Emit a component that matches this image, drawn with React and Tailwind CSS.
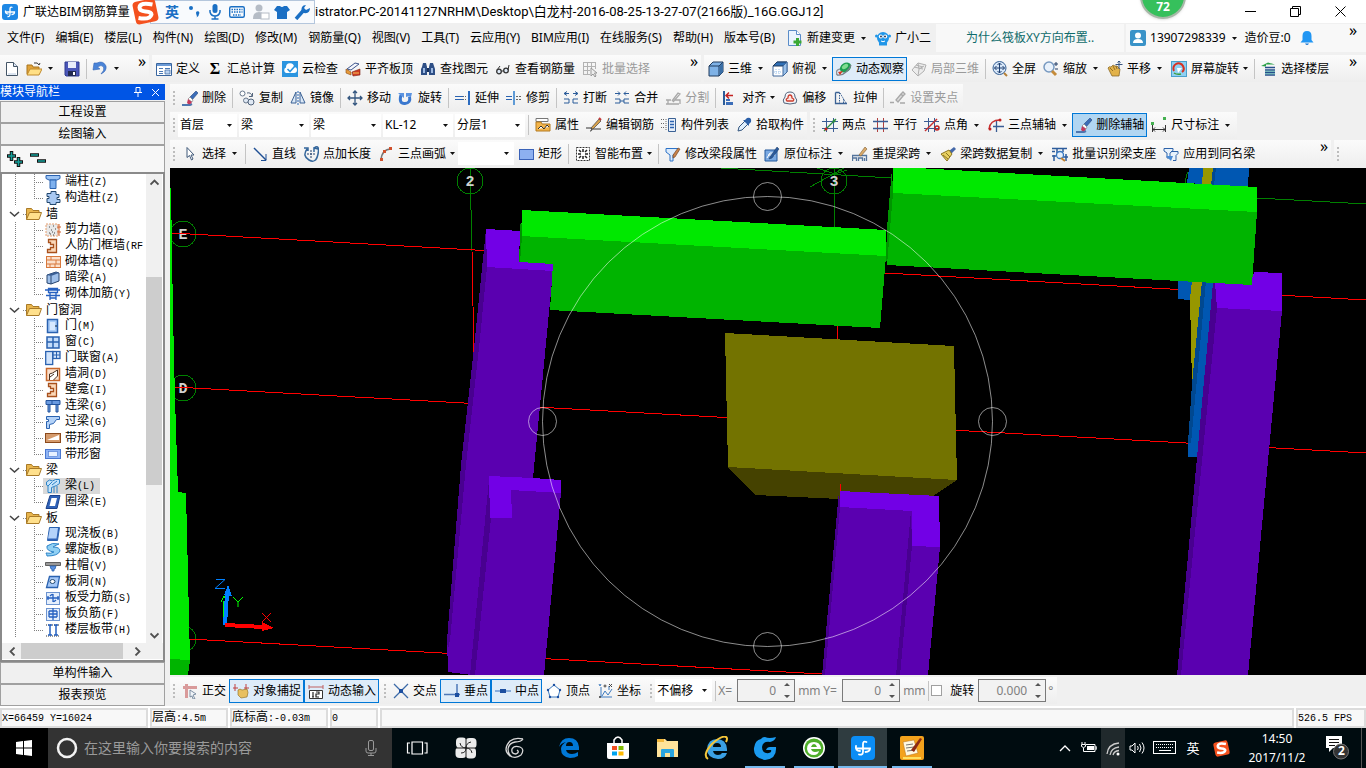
import React from "react";

const blue = "#2a62b0";
const navy = "#24496f";
const gray = "#a8a8a8";

const glyphs = {
  app: <><rect width="16" height="16" rx="3" fill="#1e88e5" /><path d="M10.500 3.500q-2.500-1-2.500 1.500v5q0 3-2.500 2.500M3.500 6.500q-.5 3.500 3 3.500M3.500 8h9q0 2.500-3 2.500" fill="none" stroke="#fff" strokeWidth="1.300" /></>,
  newfile: <><path d="M2.500 1.500h7l4 4v9h-11z" fill="#fff" stroke="#456" /><path d="M9.500 1.500v4h4" fill="#dbe6f5" stroke="#456" /><path d="M4 13h8" stroke="#b9cbe2" /></>,
  open: <><path d="M1 4h5l1 2h6v7H1z" fill="#e0a33a" stroke="#a8741c" /><path d="M1 14l3-6h12l-3 6z" fill="#ffdf85" stroke="#c08a2c" /><path d="M8 2q4-1 5 2M13 4l1-2" stroke="#333" fill="none" /></>,
  save: <><path d="M1 1h14v14H2l-1-1z" fill="#4a56b8" stroke="#2f3a90" /><path d="M4 1h8v6H4z" fill="#e8ecfa" /><path d="M4 10h8v5H4z" fill="#222a50" /><path d="M9 11h2v3H9z" fill="#fff" /></>,
  undo: <><path d="M2 2l-1 7 7-1-2.500-2q4-3 6 0 1.500 3-2.500 7 6-3 5-8-3-6-9-3z" fill="#4a84d8" stroke="#3567b5" strokeWidth=".6" /></>,
  define: <><path d="M.5 2.500h15v12H.5z" fill="#fff" stroke="#39659e" /><path d="M1 3h14v2H1z" fill="#6b9ad6" /><path d="M3 7.500h4M3 10.500h4M3 12.500h4M9 7.500h5M9 10.500h5" stroke="#4a78b4" /><path d="M9 9h5v4H9z" fill="#b9d2f0" stroke="#39659e" strokeWidth=".7" /></>,
  cloudcheck: <><rect width="16" height="16" fill="#2b95e0" /><path d="M4 12a3 3 0 010-5.500 4 4 0 018-.5 3 3 0 010 6z" fill="#fff" /><path d="M5.500 8l2.500 2.500L13 5" stroke="#2b95e0" fill="none" strokeWidth="1.600" /></>,
  level: <><path d="M2 8l8-6 4 1-8 6z" fill="#f4f6fc" stroke="#3f568c" /><path d="M1 8l5 3v3l-5-2z" fill="#e69a3a" stroke="#8c4a10" strokeWidth=".6" /><path d="M7 11l8-3v6l-7 1z" fill="#cf3c22" stroke="#7c2414" strokeWidth=".6" /><path d="M8 12h6" stroke="#f7c55a" /></>,
  binoc: <><path d="M2 6l1-4h3l1 4v8H1V8zM9 6l1-4h3l2 6v6H9z" fill="#2e4f86" /><path d="M7 7h2v4H7z" fill="#18315c" /><path d="M3 7h2v5H3zM11 7h2v5h-2z" fill="#9db9e2" /></>,
  glasses: <><circle cx="4" cy="10.500" r="2.300" fill="#dfeaf7" stroke="#333" strokeWidth="1.300" /><circle cx="11" cy="9.500" r="2.300" fill="#dfeaf7" stroke="#333" strokeWidth="1.300" /><path d="M6.500 10h2M2 9l3-4M13 9l1-5" stroke="#333" fill="none" /></>,
  batch: <><path d="M1 1.500h13M1 5.500h13M1 9.500h7M1 13.500h7M1.500 1v13M5.500 1v13M9.500 1v7M13.500 1v7" stroke="#b3b3b3" /><path d="M9 7v8l2-2 2 3 1-1-1.500-3H15z" fill="#eee" stroke="#999" /></>,
  cube: <><path d="M1 5l4-4h10v10l-4 4H1z" fill="#7fb2e6" stroke="#203a5c" /><path d="M1 5h10v10M11 5l4-4" fill="none" stroke="#203a5c" /><path d="M11.500 5L15 1.500V11l-3.500 3.500z" fill="#3a6ea5" /></>,
  cubetop: <><path d="M1 5l4-4h10v10l-4 4H1z" fill="#fff" stroke="#41699c" /><path d="M1 5l4-4h10l-4 4z" fill="#2f6fb5" stroke="#203a5c" /><path d="M11 5v10l4-4V1z" fill="#9cc2ea" stroke="#41699c" /><path d="M4 8v6M7 8v6M2 11h8" stroke="#9cc2ea" strokeDasharray="1 1" /></>,
  orbit: <><path d="M1 14Q-1 9 4 8" stroke="#8d9298" strokeWidth="1.500" fill="none" /><ellipse cx="9.500" cy="6.500" rx="6" ry="4.500" transform="rotate(-35 9.500 6.500)" fill="#1e9e52" /><ellipse cx="9" cy="5.500" rx="3.500" ry="2" transform="rotate(-35 9 5.500)" fill="#7fdc92" /><path d="M1 14q5 1 9-3 4-3 5-7" stroke="#777f88" strokeWidth="1.300" fill="none" /><path d="M2 11l5-1-3 4z" fill="#d43a20" /></>,
  local3d: <path d="M1 9l6-7 8 2-2 6-6 5zM7 2l1 6-1 7M3 6l9 2M8 8l5-3M5 4l7 2" fill="#ececec" stroke="#b0b0b0" />,
  full: <><circle cx="7.500" cy="7" r="6.500" fill="#d7e6f7" stroke="#345f94" /><path d="M7.500 2v10M2.500 7h10M5.500 4l2-2 2 2M5.500 10l2 2 2-2M4.500 5l-2 2 2 2M10.500 5l2 2-2 2" stroke="#1e3f70" fill="none" /><path d="M12 12l3 3" stroke="#b58038" strokeWidth="2" /></>,
  zoomi: <><circle cx="6" cy="6" r="5" fill="#e8f1fb" stroke="#7799c0" strokeWidth="1.500" /><path d="M9 10l4 4" stroke="#c58b3a" strokeWidth="3" /><path d="M11 3h4M13 1v4M12 8h3" stroke="#223c66" /></>,
  pan: <><path d="M1 7q1-2 3-1l2-2 2 1 2 0 3 3-1 7H5z" fill="#e2b24a" stroke="#7e5d1c" strokeWidth=".7" /><path d="M3 7l3 3M6 5l2 4M9 5l1 3" stroke="#7e5d1c" strokeWidth=".8" /><path d="M12 0v8M8.500 3.500h7M10.500 1.500l1.500-1.500 1.500 1.500" stroke="#36537e" fill="none" /></>,
  screenrot: <><rect x=".5" y=".5" width="15" height="15" fill="#8fd0f2" stroke="#4aa0cc" /><path d="M3 10a5 5 0 019-5q2 4-1 6" stroke="#d83020" fill="none" strokeWidth="2" /><path d="M6 7h5l-4 5z" fill="#fff" /><path d="M3 12q3 2 7 1" stroke="#3f9c38" fill="none" strokeWidth="1.500" /></>,
  floors: <><path d="M0 5l7-3.500 7 2H5v2z" fill="#2aa048" /><path d="M4 6.500h10M4 9h10M4 11.500h10M4 14h10" stroke="#274e8c" strokeWidth="1.500" /><path d="M4 10.200h10M4 12.800h10" stroke="#39a6a0" strokeWidth=".8" /></>,
  brush: <><path d="M0 15h8l2-1" stroke="#4d77b0" strokeWidth="2" /><path d="M8 7l6-6 2 2-6 7z" fill="#3b6db8" stroke="#25477c" strokeWidth=".6" /><path d="M8 7l3 3-1 2-4-3z" fill="#fff" stroke="#777" strokeWidth=".6" /><path d="M6 9l4 3q-2 4-5 1z" fill="#c33a5c" /></>,
  copy: <><circle cx="3.500" cy="3.500" r="2.500" fill="#fff" stroke="#68788c" /><circle cx="7" cy="10.500" r="2.500" fill="#dfe8f3" stroke="#68788c" /><circle cx="12" cy="12" r="3" fill="#dfe8f3" stroke="#52647c" /><path d="M8 3q4-1 5 3M13.500 3v3.500H10" stroke="#52647c" fill="none" /></>,
  mirror: <><path d="M6 2v11H1zM10 2v11h5z" fill="#dce9f7" stroke="#3a6194" /><path d="M8 1v14" stroke="#2464b4" strokeDasharray="2 1" /></>,
  move: <path d="M8 1v14M1 8h14M6 3l2-2 2 2M6 13l2 2 2-2M3 6L1 8l2 2M13 6l2 2-2 2" stroke="#34567f" fill="none" strokeWidth="1.300" />,
  rotate: <><path d="M3 5Q.5 14 7 13.500 13 13 11.500 6.500" stroke="#3a78cf" fill="none" strokeWidth="3" /><path d="M0 3h6v5zM8 3h6l-1 4-2-1-3 1z" fill="#5b93e0" /></>,
  extend: <><path d="M0 6.500h8M0 9.500h8" stroke={blue} /><path d="M8 6.500h4M8 9.500h4" stroke="#666" strokeDasharray="1 1" /><path d="M14 1v14" stroke="#2c6cc0" strokeWidth="2" /></>,
  trim: <><path d="M0 6.500h6M0 9.500h6" stroke={blue} /><path d="M10 6.500h5M10 9.500h5" stroke="#666" strokeDasharray="2 1" /><path d="M8 1v14" stroke="#5f9bd6" strokeWidth="2" /></>,
  breaki: <path d="M1 3.500h5M4 1.500l-3 2 3 2M15 3.500h-5M12 1.500l3 2-3 2M1 9h5M1 13h5M10 9h5M10 13h5M6 9v4M10 9v4" stroke="#2b5c9a" fill="none" />,
  merge: <path d="M1 3.500h5M4 1.500l2 2-2 2M15 3.500h-5M12 1.500l-2 2 2 2M1 9h5v4H1M15 9h-5v4h5M6 11h4" stroke="#2b5c9a" fill="none" />,
  split: <path d="M1 10h5M1 14h13M3 10v4M7 11l6-8 2 1-7 8M10 10h5v4" stroke={gray} fill="none" strokeWidth="1.300" />,
  align: <><path d="M2 1v14" stroke="#2b5c9a" strokeWidth="2" /><path d="M4 5.500h7M7 2.500l-3 3 3 3" stroke="#c32222" fill="none" strokeWidth="1.500" /><path d="M4 9h4v2H4zM4 12h7v3H4z" fill="#3b6db8" /></>,
  offset: <><path d="M2 13q-2-3 1-6 0-5 5-5t5 5q3 3 1 6-6 2-12 0z" fill="#f4f4f8" stroke="#52647c" /><path d="M5 11q-2-2 1-3 0-3 2-3t2 3q3 1 1 3z" fill="#fce3df" stroke="#cb3c2c" strokeWidth="1.300" /></>,
  stretch: <><path d="M2.500 2.500h4M2.500 2.500v11h4M6 13.500h8" stroke="#3a6194" fill="none" strokeWidth="1.300" /><path d="M6.500 2.500v11M7 3l6 10M10.500 9v4" stroke="#3a6194" strokeDasharray="1.500 1" fill="none" /></>,
  grippt: <path d="M0 12.500h4M6 10l5-6 2 2-5 6zM11 4l2-2 2 2-2 2M10 13h5" stroke={gray} fill="#ddd" strokeWidth="1.300" />,
  prop: <><path d="M1 1.500h12v3H1z" fill="#fff" stroke="#777" /><path d="M1 5h5l1 2h8v7H1z" fill="#f3b44a" stroke="#b37a20" /><path d="M3 12l3-3 3 3 3-4 2 2" stroke="#333" fill="#fff" /></>,
  editbar: <><path d="M0 11h5q2 3-1 3M5 12h10" stroke="#333" fill="none" /><path d="M5 11l8-9 2 2-8 8z" fill="#d8a24c" stroke="#444" strokeWidth=".7" /><path d="M13 1l2 2" stroke="#c43a3a" strokeWidth="2" /></>,
  list: <><path d="M0 2.500h3M0 6.500h3M0 10.500h3M5 2v12" stroke="#666" strokeDasharray="1 1" /><path d="M7.500 1.500h7v13h-7z" fill="#e7effa" stroke="#3a6194" /><path d="M9 4.500h4M9 7.500h4M9 10.500h4" stroke={blue} strokeWidth="1.500" /></>,
  picker: <><path d="M2 14l1-4 6-6 3 3-6 6z" fill="#dfeefc" stroke="#34567f" /><path d="M7 3l2 0 2-2q5-1 4 4l-2 2v2z" fill="#2a5fa8" /></>,
  twopt: <><path d="M4.500 1v14M11.500 1v14M0 4.500h16M0 11.500h16" stroke="#3a5c94" /><path d="M2 14L14 2" stroke="#2c8c40" strokeWidth="1.300" /><circle cx="4" cy="12" r="1.500" fill="#c02020" /><circle cx="12" cy="4" r="1.500" fill="#2c8c40" /></>,
  parallel: <><path d="M4.500 1v14M10.500 1v14" stroke="#b04040" /><path d="M0 4.500h15M0 11.500h15" stroke="#3a5c94" strokeWidth="1.500" /></>,
  ptangle: <><path d="M4.500 1v14M10.500 1v14M0 4.500h15M0 11.500h15" stroke="#3a5c94" /><path d="M1 14L13 2" stroke="#c83030" strokeWidth="1.500" /><circle cx="13" cy="11" r="2" fill="none" stroke="#c02020" strokeWidth="1.500" /></>,
  threept: <><path d="M8.500 4v11M5 9.500h11" stroke="#3a5c94" strokeWidth="1.300" /><path d="M1 12Q2 3 12 3" stroke="#c83030" fill="none" strokeWidth="1.300" /><circle cx="2" cy="12" r="1.500" fill="#c02020" /><circle cx="12" cy="3" r="1.500" fill="#c02020" /></>,
  dim: <><path d="M1.500 8v7M14.500 8v7M2 12.500h12M4 10.500l-2 2 2 2M12 10.500l2 2-2 2" stroke="#333" fill="none" /><path d="M0 5h3v3H0zM12 0h3v3h-3z" fill="#44b050" /></>,
  arrow: <path d="M5 1.500v10l2.500-2 2 4.500 1.500-1-2-4h3z" fill="#fff" stroke="#3f5878" />,
  line: <><path d="M2 2l12 12" stroke="#1e4f94" strokeWidth="1.500" /><path d="M14 8v6.500H9" stroke="#1e4f94" fill="none" /></>,
  ptlen: <><path d="M4 3Q-1 10 6 14t9-6-4-6M1 2h4v3M15 3l-4-1 0 4" stroke="#35679c" fill="none" strokeWidth="1.500" /><path d="M8 4v8M4 8h8" stroke="#23406c" strokeDasharray="2 1" /></>,
  arc: <><path d="M3 14Q4 3 13 3" stroke="#777" fill="none" strokeWidth="1.500" /><path d="M2 12h3v3H2zM5 4h3v3H5zM11 1h3v3h-3z" fill="#d0502c" /></>,
  rect: <rect x="1.500" y="3.500" width="14" height="10" fill="#8db0f0" stroke="#3a62b8" />,
  smart: <><path d="M1.500 1.500h13v13h-13z" fill="#fff" stroke="#333" strokeDasharray="2 1" /><path d="M4 4l2 2M12 4l-2 2M4 12l2-2M12 12l-2-2M8 3v3M8 10v3M3 8h3M10 8h3" stroke="#222" strokeWidth="1.500" /></>,
  modseg: <><path d="M1 2.500h12v3L8 9v6H5V9L1 6z" fill="#dcebfb" stroke="#2d73c8" /><path d="M8 9l5-7 2 1-5 8-2 1z" fill="#c8824a" stroke="#6a3e1c" strokeWidth=".6" /></>,
  mark: <><path d="M1 4h12v11H1z" fill="#7aa9e2" stroke="#22599c" /><path d="M3 12l3-5h5M4 9h7" stroke="#fff" fill="none" /><path d="M6 11l7-10 2 2-7 9-3 1z" fill="#2a5a9c" stroke="#17375f" strokeWidth=".5" /></>,
  respan: <><path d="M.5 15v-3h4v3M6.500 15v-3h4v3M.5 12V9.500h14V15M12.500 15v-3" stroke="#54749c" fill="none" strokeWidth="1.300" /><path d="M7 9l6-8 2 2-6 7z" fill="#dcac6c" stroke="#7a5a30" strokeWidth=".6" /></>,
  spancopy: <><path d="M9 5l5-4 2 2-5 5z" fill="#4468a8" /><path d="M1 8l8-4 3 4-5 7z" fill="#e8d060" stroke="#8c7420" /><path d="M3 9l5 4M6 7l4 4" stroke="#8c7420" /></>,
  recog: <><path d="M0 2.500h15M0 5.500h3M2 9v6M5 3v4M11 3v3M14 8v7M0 10h4M11 11h5" stroke="#2d5c9c" strokeWidth="1.500" /><circle cx="8" cy="9" r="3.500" fill="#e5f0fb" stroke="#3577c0" strokeWidth="1.300" /><path d="M9 12l4 3" stroke="#c08030" strokeWidth="2" /></>,
  apply: <><path d="M1 2.500h9v2L7 7v5H4V7L1 5zM8 5.500h7v2l-2 2v5h-3" fill="#e8f2fc" stroke="#2d62a8" /><path d="M3 10l5 5 2-5" fill="#4b8cd6" /></>,
  ortho: <><path d="M1 3h14v3H1zM3 1h3v14H3z" fill="#d99a9a" /><path d="M8 7l6 4-3 1 2 4-2 0-1-3-2 1z" fill="#f0f4f8" stroke="#657890" strokeWidth=".8" /></>,
  snap: <><path d="M2 1v7M13 1v7M0 5h5M11 5h5" stroke="#c04040" /><path d="M5 7q2-2 4 0l5-1q2 3 0 8l-6 1-3-3z" fill="#e8c060" stroke="#8a6820" strokeWidth=".6" /></>,
  dyn: <><path d="M1 2v4M15 2v4M1 4h14" stroke="#c06060" /><path d="M1.500 7.500h13v8h-13z" fill="#fff" stroke="#333" /><path d="M5 9v5M4 14h2M8 9h3v2H8v3h3" stroke="#222" fill="none" strokeWidth="1.200" /></>,
  cross: <><path d="M1 1l14 14M15 1L1 15" stroke="#3d6ba8" strokeWidth="1.300" /><rect x="6" y="6" width="4" height="4" fill="#1c4fa0" /></>,
  perp: <><path d="M0 11.500h16M13 1v11" stroke="#4d78b8" strokeWidth="1.500" /><rect x="11" y="10" width="4" height="4" fill="#1c4fa0" /></>,
  mid: <><path d="M0 8h16" stroke="#6d98d0" strokeWidth="1.500" /><rect x="5" y="6" width="6" height="4" fill="#1c4fa0" /></>,
  vertex: <><path d="M8 2l6 5-2 7H4L2 7z" fill="#fff" stroke="#3d7bc0" /><circle cx="8" cy="2" r="1.200" fill="#1c4fa0" /><circle cx="14" cy="7" r="1.200" fill="#1c4fa0" /><circle cx="2" cy="7" r="1.200" fill="#1c4fa0" /><circle cx="4" cy="14" r="1.200" fill="#1c4fa0" /><circle cx="12" cy="14" r="1.200" fill="#1c4fa0" /></>,
  coord: <><path d="M4 4v10h11M5 13l3-5 3 4 4-6M12 3v4M2 1l1 2 1-2" stroke="#3d7bc0" fill="none" /><circle cx="3" cy="14" r="1" fill="#333" /><circle cx="8" cy="3" r="1" fill="none" stroke="#444" /><path d="M12 1l3 3M15 1l-3 3" stroke="#444" /></>,
  doc: <><path d="M1.500.5h8l4 4v11h-12z" fill="#eaf4ff" stroke="#5a8cc8" /><path d="M9.500.5v4h4" fill="#fff" stroke="#5a8cc8" /><path d="M10.500 8v8M6.500 12h8" stroke="#3aa935" strokeWidth="3" /></>,
  robot: <><circle cx="8" cy="8" r="6" fill="#2196e8" /><circle cx="1.500" cy="6" r="1.500" fill="#2196e8" /><circle cx="14.500" cy="6" r="1.500" fill="#2196e8" /><path d="M4 13h8v2.500H4z" fill="#2196e8" /><circle cx="5.800" cy="6.500" r="2" fill="#fff" /><circle cx="10.200" cy="6.500" r="2" fill="#fff" /><circle cx="6" cy="6.500" r=".9" fill="#124" /><circle cx="10" cy="6.500" r=".9" fill="#124" /><path d="M6 11q2 1.500 4 0" stroke="#fff" fill="none" /></>,
  user: <><rect width="16" height="16" rx="2" fill="#3a93c8" /><circle cx="8" cy="5.500" r="3" fill="#fff" /><path d="M3 13q0-4 5-4t5 4z" fill="#fff" /></>,
  bell: <><path d="M8 1q4.500 0 4.500 5v4l2 2.500h-13l2-2.500V6Q3.500 1 8 1z" fill="#2196f3" /><path d="M6 13.500h4q-2 3-4 0z" fill="#1976d2" /></>,
  folder: <><path d="M.5 13.500v-11h5l1.500 2h6v3" fill="#e9b64e" stroke="#a87a28" /><path d="M.5 13.500l3-7h12l-2.500 7z" fill="#ffe08c" stroke="#a87a28" /></>,
  column: <><path d="M1 1.500h14v3l-3 1.500H4L1 4.500z" fill="#9cc4f4" stroke={blue} /><path d="M5 6h6v8.500H5z" fill="#7db0ee" stroke={blue} /></>,
  column2: <path d="M6 1.500h5v3h3v3h-2v2h3v3h-4v2H5v-2H2v-4h2v-2H2v-3h4z" fill="#a9c9f2" stroke={navy} />,
  wallshear: <><rect x="1" y="2" width="12" height="12" fill="#e8e8e8" stroke="#e8a070" strokeDasharray="2 1" /><path d="M4 5h1M8 4h1M6 8h1M10 7h1M4 11h1M9 11h1M7 10h1M8 13h1M5 12h1" stroke="#444" /><path d="M14 2v12M12 5h4M12 10h4" stroke="#d0602c" /></>,
  ibeam: <path d="M3.500 1.500h8v13h-9v-3h3v-2h3v-3h-3v-2h-2z" fill="#fbd8b8" stroke="#a8501c" strokeWidth="1.300" />,
  brick: <><rect x="1.500" y="2.500" width="14" height="11" fill="#fbe0cc" stroke="#d8783c" /><path d="M1 6h14M1 10h14M6 2v4M11 6v4M5 10v4M10 10v4" stroke="#d8783c" /></>,
  beamdark: <><path d="M2 5l9-3 3 1v8l-8 3-4-1z" fill="#9fc0ea" stroke="#26446e" /><path d="M2 5l4 1 8-3-3-1z" fill="#3a5f94" /><path d="M6 6v8" stroke="#26446e" /></>,
  wallrebar: <path d="M3.500 2.500h9v4h-9zM1 9.500h14M5 6v8M11 6v8M0 4h15M5 12h6" fill="none" stroke="#2660c0" strokeWidth="1.300" />,
  door: <><rect x="2.500" y="1.500" width="10" height="13" fill="#a9ccf8" stroke={blue} strokeWidth="1.500" /><rect x="5" y="4" width="5" height="8" fill="#d8e9ff" /><path d="M10 8h2" stroke="#123" /></>,
  window: <><rect x="2" y="3" width="12" height="11" fill="#c3dcfb" stroke={blue} strokeWidth="1.500" /><path d="M8 3v11M2 8h12" stroke={blue} strokeWidth="1.500" /></>,
  doorwin: <><rect x=".7" y="1.500" width="7" height="13" fill="#d2e4fb" stroke={blue} strokeWidth="1.300" /><rect x="8" y="1.500" width="7" height="7" fill="#d2e4fb" stroke={blue} strokeWidth="1.300" /><path d="M11.500 1v8M8 5h7" stroke={blue} /></>,
  hole: <><rect x="1.500" y="2.500" width="13" height="12" fill="#fbe0cc" stroke="#c8682c" strokeWidth="1.500" /><path d="M4.500 14V8l3-1 5-3v6l-4 4M5 11l4-3" stroke="#4a3020" fill="#fff" /></>,
  linkbeam: <path d="M1 2.500h14v4H1zM3 6v8h2V6M11 6v8h2V6M7 3v3" fill="#6a9ae0" stroke="#24549c" />,
  lintel: <path d="M1.500 2.500h13v3h-3l-3 4-4 1v4h-3v-7h2v-2h-2z" fill="#b3d2f8" stroke={blue} />,
  striphole: <><rect x=".5" y="3.500" width="15" height="9" fill="#d49a6c" stroke="#8c4a1c" /><path d="M2 10l12-5v5z" fill="#fff" /></>,
  stripwin: <><rect x=".5" y="3.500" width="15" height="9" fill="#8fb4f4" stroke="#4a78d0" /><rect x="3.500" y="5.500" width="9" height="5" fill="#e8f1ff" stroke="#4a78d0" strokeWidth=".6" /></>,
  beam: <><path d="M1.500 4l3-2 3 1 3-1.500h4v4l-3 2-5 2v5H3V8L1.500 7z" fill="#c4e2fa" stroke="#2d84c8" /><path d="M9 9v6M12 8v7M3 8l4-4M7 7l5-4" stroke="#2d84c8" /></>,
  ringbeam: <><path d="M5 1.500h10l-3 13H1z" fill="#2f62b8" stroke="#1c428c" /><path d="M6.500 4h5.500l-2 8H4.500z" fill="#fff" /></>,
  slab: <><path d="M4.500 1.500h10l-2 13h-10z" fill="#2f62b8" stroke={blue} /><path d="M5 2h8l-1.500 10.500H3z" fill="#b4d2fa" /></>,
  spiral: <path d="M2 4q5-4 12-2-3 1-6 3 7 0 7 4-2 5-13 5 0-1-1-3 5 1 8-1-8-1-7-6z" fill="#8fd0f4" stroke="#2d84c8" />,
  cap: <><path d="M.5 4.500h15v3H.5z" fill="#999" stroke="#444" strokeWidth=".8" /><path d="M5 8h6l-1 3H9v2H7v-2H6z" fill="#5d92e0" stroke={blue} strokeWidth=".8" /></>,
  slabhole: <><path d="M4.500 2.500h10l-2 11h-11z" fill="#a4c8f8" stroke={blue} strokeWidth="1.300" /><ellipse cx="7.500" cy="7.500" rx="2.500" ry="2" fill="#fff" stroke={navy} /></>,
  slabbar: <><rect x="1.500" y="2.500" width="13" height="12" fill="#e5effc" stroke="#6d94d0" /><path d="M2 8h12M8 4v8M5 6q3-3 3 0M11 10q-3 3-3 0M3 6v4M13 6v4" stroke="#2560c0" fill="none" strokeWidth="1.300" /></>,
  slabneg: <><rect x="1.500" y="2.500" width="13" height="12" fill="#e5effc" stroke="#6d94d0" /><path d="M4 5h8M4 8h8M4 11h8M8 2v12M4 5v6M12 5v6" stroke="#2560c0" fill="none" strokeWidth="1.300" /></>,
  strip: <><path d="M1 3h14M1 14h14" stroke="#333" strokeDasharray="1 1" /><path d="M5 3v10M11 3v10M3 3h4M9 3h4M3 13h4M9 13h4" stroke="#2560c0" strokeWidth="1.500" /></>,
};

const Icon = ({ name }) => (
  <svg className="h-4 w-4 shrink-0" viewBox="0 0 16 16" aria-hidden="true">{glyphs[name]}</svg>
);

const Caret = ({ className }) => (
  <span className={`flex shrink-0 justify-center ${className}`}>
    <svg className="h-[3px] w-[5px]" viewBox="0 0 5 3"><path d="M0 0h5L2.500 3z" fill="#111" /></svg>
  </span>
);

const Tool = ({ icon, label, drop, state, sigma }) => {
  const tone =
    state === "on" ? "border-[#0078d7] bg-[#deecf9]"
    : state === "deep" ? "border-[#0078d7] bg-[#b1d6f2]"
    : state === "off" ? "border-transparent text-[#9a9a9a]"
    : "border-transparent";
  return (
    <button className={`flex h-6 shrink-0 items-center gap-1 whitespace-nowrap border pl-[3px] pr-[2px] ${tone}`}>
      {sigma ? <span className="w-4 text-center font-serif text-[16px] font-bold">Σ</span> : <Icon name={icon} />}
      <span className="leading-4">{label}</span>
      {drop && <Caret className={drop === "tight" ? "w-[5px]" : "w-[9px]"} />}
    </button>
  );
};

const Sep = () => <span className="ml-[3px] mr-[2px] h-5 w-px shrink-0 bg-[#c4c4c4]" />;
const Grip = () => (
  <span className="flex w-2 shrink-0 flex-col items-center gap-[2px]">
    {[0, 1, 2, 3].map((i) => <span key={i} className="h-[2px] w-[2px] bg-[#bdbdbd]" />)}
  </span>
);
const More = ({ edge }) => (
  <span className={`ml-auto flex self-stretch ${edge ? "mr-[6px]" : ""}`}>
    <button className="w-[14px] shrink-0 self-start text-center text-[16px] leading-3" aria-label="更多">»</button>
  </span>
);

const Bar = ({ children, className = "" }) => (
  <div className={`flex h-[27px] shrink-0 items-center bg-linear-to-b from-[#fbfbfb] to-[#eeeeee] ${className}`}>{children}</div>
);

const Combo = ({ value, label, className = "w-[70px]" }) => (
  <span className={`flex h-[23px] shrink-0 items-center bg-white ${className}`}>
    <select aria-label={label} defaultValue={value} className="h-full min-w-0 flex-1 appearance-none bg-transparent pl-[2px] outline-none">
      <option>{value}</option>
    </select>
    <Caret className="w-4" />
  </span>
);

const menus = ["文件(F)", "编辑(E)", "楼层(L)", "构件(N)", "绘图(D)", "修改(M)", "钢筋量(Q)", "视图(V)", "工具(T)", "云应用(Y)", "BIM应用(I)", "在线服务(S)", "帮助(H)", "版本号(B)"];

const tree = [
  { i: "column", t: "端柱(Z)" }, { i: "column2", t: "构造柱(Z)", last: true },
  { g: "墙" },
  { i: "wallshear", t: "剪力墙(Q)" }, { i: "ibeam", t: "人防门框墙(RF" }, { i: "brick", t: "砌体墙(Q)" }, { i: "beamdark", t: "暗梁(A)" }, { i: "wallrebar", t: "砌体加筋(Y)", last: true },
  { g: "门窗洞" },
  { i: "door", t: "门(M)" }, { i: "window", t: "窗(C)" }, { i: "doorwin", t: "门联窗(A)" }, { i: "hole", t: "墙洞(D)" }, { i: "ibeam", t: "壁龛(I)" }, { i: "linkbeam", t: "连梁(G)" }, { i: "lintel", t: "过梁(G)" }, { i: "striphole", t: "带形洞" }, { i: "stripwin", t: "带形窗", last: true },
  { g: "梁" },
  { i: "beam", t: "梁(L)", sel: true }, { i: "ringbeam", t: "圈梁(E)", last: true },
  { g: "板" },
  { i: "slab", t: "现浇板(B)" }, { i: "spiral", t: "螺旋板(B)" }, { i: "cap", t: "柱帽(V)" }, { i: "slabhole", t: "板洞(N)" }, { i: "slabbar", t: "板受力筋(S)" }, { i: "slabneg", t: "板负筋(F)" }, { i: "strip", t: "楼层板带(H)", last: true },
];

const Narrow = ({ text }) => (
  <>
    {text.split(/([\x20-\x7e]+)/).filter(Boolean).map((s, i) =>
      /[\x20-\x7e]/.test(s) ? <span key={i} className="font-['Liberation_Mono',monospace] text-[10px]">{s}</span> : <span key={i}>{s}</span>
    )}
  </>
);

const TreeRow = ({ row }) =>
  row.g ? (
    <li className="flex h-4 items-center whitespace-nowrap">
      <svg className="h-4 w-6 shrink-0" viewBox="0 0 24 16"><path d="M8 6l4.500 4L17 6" fill="none" stroke="#444" strokeWidth="1.600" /><path d="M21 8.500h3" stroke="#888" strokeDasharray="1 1" /></svg>
      <Icon name="folder" />
      <span className="pl-1 leading-4">{row.g}</span>
    </li>
  ) : (
    <li className="flex h-4 items-center whitespace-nowrap">
      <svg className="h-4 w-[41px] shrink-0" viewBox="0 0 41 16">
        <path d={row.last ? "M13.500 0v16M32.500 0v8M32 8.500h9" : "M13.500 0v16M32.500 0v16M32 8.500h9"} fill="none" stroke="#808080" strokeDasharray="1 1" />
      </svg>
      <span className={`flex h-4 items-center pl-[2px] ${row.sel ? "bg-[#d9d9d9] pr-[5px]" : ""}`}>
        <Icon name={row.i} />
        <span className="pl-1 leading-4"><Narrow text={row.t} /></span>
      </span>
    </li>
  );

const PanelButton = ({ children }) => (
  <button className="h-[22px] w-full shrink-0 border border-[#a0a0a0] bg-[#f0f0f0] text-center leading-5">{children}</button>
);

const ScrollArrow = ({ d, label }) => (
  <button aria-label={label} className="flex h-4 w-4 shrink-0 items-center justify-center">
    <svg className="h-[9px] w-[9px]" viewBox="0 0 9 9"><path d={d} fill="none" stroke="#505050" strokeWidth="1.800" /></svg>
  </button>
);

const Sidebar = () => (
  <aside className="flex w-[165px] shrink-0 flex-col">
    <div className="mb-px flex h-4 shrink-0 items-center bg-[#0055e5] text-white">
      <span className="flex-1 leading-4">模块导航栏</span>
      <button aria-label="固定" className="w-[18px]"><svg className="h-[10px] w-[10px]" viewBox="0 0 10 10"><path d="M3 .5v5M7 .5v5M3 .5h4M1 5.500h8M5 6v4" stroke="#fff" fill="none" /></svg></button>
      <button aria-label="关闭" className="w-[14px]"><svg className="h-[9px] w-[9px]" viewBox="0 0 9 9"><path d="M1 1l7 7M8 1L1 8" stroke="#fff" /></svg></button>
    </div>
    <PanelButton>工程设置</PanelButton>
    <PanelButton>绘图输入</PanelButton>
    <div className="flex h-[27px] shrink-0 items-center border-x border-t border-[#a0a0a0] bg-[#f7f7f7] pl-[6px]">
      <svg className="h-4 w-10" viewBox="0 0 40 16">
        <g stroke="#111" strokeWidth="3.500"><path d="M0 5h9M4.500 0v10M7 11h9M11.500 6v10M23 4h9M30 10h9" /></g>
        <g stroke="#15a09a" strokeWidth="1.600"><path d="M1 5h7M4.500 1v8M8 11h7M11.500 7v8M24 4h7M31 10h7" /></g>
      </svg>
    </div>
    <div className="flex min-h-0 flex-1 flex-col border-2 border-[#8a8a8a] bg-white">
      <div className="flex min-h-0 flex-1">
        <ul className="min-w-0 flex-1 overflow-hidden">
          {tree.map((r, i) => <TreeRow key={i} row={r} />)}
        </ul>
        <div className="mr-px flex w-4 shrink-0 flex-col bg-[#f0f0f0]">
          <ScrollArrow label="向上" d="M.5 6.500l4-4 4 4" />
          <div className="flex-[86]" />
          <div className="flex-[206] bg-[#cdcdcd]" />
          <div className="flex-[141]" />
          <ScrollArrow label="向下" d="M.5 2.500l4 4 4-4" />
        </div>
      </div>
      <div className="mb-px flex h-4 shrink-0 bg-[#f0f0f0] pl-[2px]">
        <ScrollArrow label="向左" d="M6.500.5l-4 4 4 4" />
        <div className="ml-px mr-[6px] w-[102px] bg-[#cdcdcd]" />
        <ScrollArrow label="向右" d="M2.500.5l4 4-4 4" />
      </div>
    </div>
    <PanelButton>单构件输入</PanelButton>
    <PanelButton>报表预览</PanelButton>
  </aside>
);

const P = ({ p, f }) => <polygon points={p} fill={f} />;

const Viewport = () => (
  <svg className="min-h-0 w-full flex-1 bg-black" viewBox="170 168 1196 507" preserveAspectRatio="xMinYMin slice" shapeRendering="crispEdges">
    <g fill="none" stroke="#008000">
      <circle cx="470" cy="181" r="13" /><circle cx="834" cy="181" r="13" /><circle cx="183" cy="234" r="13" /><circle cx="183" cy="388" r="13" /><circle cx="183" cy="639" r="13" />
      <path d="M470 168L472 251M834 168L835 228M721 168L892 178M1257 198L1366 204M810 187L844 168M817 168l18 6 12-4M1188 172q-3 5-2 11" />
    </g>
    <g fill="#d0d0d0" fontFamily="Liberation Mono, monospace" fontWeight="bold" fontSize="15" textAnchor="middle">
      <text x="470" y="186">2</text><text x="834" y="186">3</text><text x="183" y="239">E</text><text x="183" y="393">D</text>
    </g>
    <path d="M172 233L1366 300M175 387L1366 453M189 639L840 675M472 251L474 360M837 320L838 345" stroke="#f00" fill="none" />
    <P f="#00e800" p="170,188 171,188 173,315 175,398 178,492 186,493 188,575 190,660 170,659" />
    <P f="#00b400" p="170,659 190,660 188,675 170,675" />

    <P f="#0057b2" p="1189,168 1249,168 1248,187 1187,183" />
    <P f="#004890" p="1213,168 1216,168 1214,186 1211,186" />
    <P f="#979700" p="1203,168 1213,168 1211,186 1202,186" />
    <P f="#0057b2" p="1178,280 1193,281 1190,300 1178,299" />
    <P f="#0057b2" p="1202,281 1215,283 1198,457 1188,457 1188,443 1192,384" />
    <P f="#004890" p="1202,281 1206,281 1191,443 1188,443 1192,384" />
    <P f="#979700" p="1192,281 1202,281 1192,384 1190,298" />
    <P f="#7200e6" p="1215,283 1251,283 1254,272 1282,273 1282,311 1217,308" />
    <P f="#5a00b0" p="1215,300 1217,308 1282,311 1248,675 1180,675" />
    <P f="#480090" p="1213,283 1215,283 1217,308 1181,675 1177,675" />

    <P f="#7200e6" p="486,229 520,231 519,262 553,264 553,271 487,267" />
    <P f="#5a00b0" p="485,250 487,267 553,271 533,478 489,480 472,675 448,672 447,640" />
    <P f="#480090" p="486,229 487,267 479,348 466,465 450,640 448,650 447,640 461,465 474,348" />
    <P f="#5a00b0" p="511,490 561,493 544,675 475,675 490,516" />
    <P f="#480090" p="489,480 491,518 475,675 470,675 487,500" />
    <P f="#7200e6" p="489,476 533,478 561,480 561,493 511,490 512,518 490,518" />

    <P f="#00b400" p="522,236 886,256 880,328 550,310 553,264 520,262" />
    <P f="#00e800" p="522,210 886,230 886,256 521,236" />
    <P f="#009400" p="521,212 522,236 520,263 519,262" />
    <P f="#00b400" p="893,193 1257,212 1252,285 887,265" />
    <P f="#00e800" p="893,168 917,168 1257,187 1257,212 893,193" />
    <P f="#009400" p="892,168 893,193 887,265 886,256 887,228" />

    <P f="#737300" p="725,333 954,346 957,480 728,467" />
    <P f="#454200" p="728,467 957,480 933,496 839,499 755,495" />
    <path d="M840.500 484v8" stroke="#f00" />
    <P f="#5a00b0" p="840,507 912,511 912,546 940,547 928,675 823,675" />
    <P f="#480090" p="839,491 840,507 825,675 822,675" />
    <P f="#480090" p="911,511 912,546 900,675 896,675" />
    <P f="#7200e6" p="840,491 939,496 940,547 912,546 912,511 840,507" />

    <g fill="none" stroke="#fff" strokeOpacity=".55" shapeRendering="auto">
      <circle cx="767.500" cy="421.500" r="225" />
      <circle cx="767.500" cy="196.500" r="14" /><circle cx="767.500" cy="646.500" r="14" /><circle cx="542.500" cy="421.500" r="14" /><circle cx="992.500" cy="421.500" r="14" />
    </g>

    <path d="M223.500 625v-24M221 602l3-6 2 4" stroke="#0f0" fill="none" />
    <path d="M225 625l2-32" stroke="#0080ff" strokeWidth="4" />
    <P f="#0080ff" p="228,585 232,596 224,595" />
    <path d="M225 625l38 2" stroke="#f00" strokeWidth="4" />
    <P f="#f00" p="262,622 274,628 262,631" />
    <g fill="none" shapeRendering="auto">
      <path d="M216 579.500h9l-10 9h10" stroke="#0080ff" />
      <path d="M233 597l5 5 5-5M238 602v5" stroke="#0f0" />
      <path d="M262 613l9 9M271 613l-9 9" stroke="#f00" />
    </g>
  </svg>
);

const Spin = ({ value, label, className }) => (
  <span className={`flex h-[23px] shrink-0 items-center border border-[#7a7a7a] bg-[#f2f2f2] text-[#808080] ${className}`}>
    <input aria-label={label} defaultValue={value} className="w-full min-w-0 flex-1 bg-transparent pr-2 text-right outline-none" />
    <svg className="mr-1 h-[17px] w-[6px]" viewBox="0 0 6 17"><path d="M0 4h6L3 1zM0 13h6l-3 3z" fill="#555" /></svg>
  </span>
);

const StatusCell = ({ children, className }) => (
  <span className={`flex items-center border-2 border-[#dcdcdc] bg-[#f8f8f8] ${className}`}>
    <span className="leading-4"><Narrow text={children} /></span>
  </span>
);

const Sogou = ({ className }) => (
  <svg className={className} viewBox="0 0 27 27" aria-hidden="true">
    <rect x="2" y="2" width="23" height="23" rx="4" fill="#f4511e" transform="rotate(-12 13.500 13.500)" />
    <path d="M20.500 6.500Q8 4 7.500 9.500q0 3.500 6 4t6 3Q18 22 6.500 20" fill="none" stroke="#fff" strokeWidth="4" />
  </svg>
);

const ImeBar = () => (
  <div className="flex h-7 w-[183px] shrink-0 items-center">
    <Sogou className="relative z-10 h-[27px] w-[27px] shrink-0" />
    <div className="-ml-[9px] flex h-6 flex-1 items-center gap-[6px] border border-[#b4c6dc] bg-[#f8fafd] pl-[14px]">
      <span className="text-[14px] font-bold leading-5 text-[#1a6fc4]">英</span>
      <svg className="h-4 w-[126px]" viewBox="0 0 126 16" fill="#1a6fc4" aria-hidden="true">
        <circle cx="6" cy="4" r="2" /><path d="M11 9a1.700 1.700 0 113 1q0 2-2.500 3.500 1-1.500 0-2.500z" />
        <rect x="27.500" y="0" width="5" height="9" rx="2.500" /><path d="M25 6v2q1 4 5 4t5-4V6M30 12v3M26.500 15h7" stroke="#1a6fc4" strokeWidth="1.500" fill="none" />
        <rect x="44.700" y="2.700" width="14.600" height="10.600" rx="1.500" fill="none" stroke="#1a6fc4" strokeWidth="1.400" /><path d="M46.500 5.500h11M46.500 8h11M48 11h8" stroke="#1a6fc4" strokeWidth="1.300" strokeDasharray="1.500 1" />
        <g fill="#b5bcc6"><circle cx="74" cy="4" r="3.500" /><path d="M68 15q0-7 6-7t6 7z" /><rect x="76" y="9" width="8" height="6" fill="#fff" stroke="#b5bcc6" /></g>
        <path d="M92 2h3q2 2 4 0h3l3 4-3 2v7H92V8l-3-2z" />
        <path d="M111 15l7-8" fill="none" stroke="#1a6fc4" strokeWidth="3.500" /><path d="M121 1l-2 3 2 2 4-2q0 6-6 5-4-1-2-6 1-2 4-2z" />
      </svg>
    </div>
  </div>
);

const TaskApp = ({ label, active, open, children }) => (
  <button aria-label={label} className={`flex h-10 w-[49px] shrink-0 flex-col items-center ${active ? "bg-[#2f3c40]" : ""}`}>
    <svg className="mt-2 h-6 w-6" viewBox="0 0 24 24">{children}</svg>
    {open && <span className={`mt-[6px] h-[2px] bg-[#76b9ed] ${active ? "w-full" : "w-10"}`} />}
  </button>
);

const Taskbar = () => (
  <footer className="flex h-10 shrink-0 items-center bg-[#000c10] text-white">
    <button aria-label="开始" className="flex h-10 w-12 shrink-0 items-center justify-center bg-black">
      <svg className="h-4 w-4" viewBox="0 0 16 16" fill="#fff"><path d="M0 2l7-1v6.500H0zM8 1l8-1v7.500H8zM0 8.500h7V15l-7-1zM8 8.500h8V16l-8-1z" /></svg>
    </button>
    <label className="flex h-10 w-[344px] shrink-0 items-center bg-[#333333] pl-2 pr-[13px]">
      <svg className="mr-[6px] h-[22px] w-[22px] shrink-0" viewBox="0 0 22 22"><circle cx="11" cy="11" r="9" fill="none" stroke="#f2f2f2" strokeWidth="2.500" /></svg>
      <input aria-label="搜索" placeholder="在这里输入你要搜索的内容" className="min-w-0 flex-1 bg-transparent text-[14px] outline-none placeholder:text-[#9a9a9a]" />
      <svg className="h-4 w-4 shrink-0" viewBox="0 0 16 16" fill="none" stroke="#9a9a9a"><rect x="5.500" y=".5" width="5" height="10" rx="1.500" /><path d="M3 8v3q0 2 2 2h6q2 0 2-2V8M8 13v2.500M5 15.500h6" /></svg>
    </label>
    <TaskApp label="任务视图"><path d="M7 6h10.500v12H7zM5 7H2.500v10H5M19.500 7H22v10h-2.500" fill="none" stroke="#fff" strokeWidth="1.200" /></TaskApp>
    <TaskApp label="四叶草"><g fill="#ececec"><rect x="2" y="1.500" width="10.500" height="10.500" rx="4" /><rect x="11.500" y="2" width="11" height="10.500" rx="4" /><rect x="1.500" y="11" width="11" height="11" rx="4" /><rect x="11.500" y="11.500" width="10.500" height="11" rx="4" /></g><path d="M12 2v10q0-5 5-6M22 12H12q5 0 6 5M12 22V12q0 5-5 5M2 12h10Q7 12 6 7" stroke="#222" fill="none" /></TaskApp>
    <TaskApp label="旋风"><path d="M20 3Q12 1 7 5-1 14 7 20q6 3 11-1 4-6-1-8-6-2-8 2-1 5 4 5 4-2 1-4M20 3q-2 3-8 3-6 1-7 7 0 5 4 8" fill="none" stroke="#d8d8d8" strokeWidth="1.300" /></TaskApp>
    <div className="ml-[5px] flex">
      <TaskApp label="Edge"><path d="M2 11Q4 2 12 2q9 0 10 9v3H9q1 4 6 4 3 0 6-2v4q-3 2-8 2-9-1-9-9 0-4 5-7-5 1-7 5zM9 10h7q0-4-3.500-4T9 10z" fill="#0078d7" /></TaskApp>
      <TaskApp label="应用商店"><path d="M1 7h22v14q0 2-2 2H3q-2 0-2-2z" fill="#fff" /><path d="M8 7V4q4-6 8 0v3" fill="none" stroke="#fff" strokeWidth="1.500" /><path d="M6 10h5v4H6z" fill="#f25022" /><path d="M12.500 10h5v4h-5z" fill="#7fba00" /><path d="M6 15.500h5v4H6z" fill="#00a4ef" /><path d="M12.500 15.500h5v4h-5z" fill="#ffb900" /></TaskApp>
      <TaskApp label="文件资源管理器"><path d="M2 3h8l2 2h11v16H2z" fill="#ffe39a" /><path d="M2 3h7v3H2z" fill="#f4b93c" /><path d="M6 21v-7q0-1 1-1h11q1 0 1 1v7h-4v-4h-5v4z" fill="#2ba5e0" /></TaskApp>
      <TaskApp label="Internet Explorer"><path d="M3 13Q4 3 13 3q9 0 10 10v2H9q1 4 5 4 3 0 4-2h5q-2 6-9 6-11-1-11-10zM9 11h8q0-4-4-4t-4 4z" fill="#3aa0e4" /><path d="M4 23Q-2 19 8 8 18-1 22 1q2 1 0 5" fill="none" stroke="#f5c63a" strokeWidth="2" /></TaskApp>
      <TaskApp label="浏览器 G" open><path d="M23 1q-1 4-6 5-7-1-8 5 0 7 7 6 3-1 2-3h-5q1-3 4-3h6q1 12-11 13Q0 22 1 12 2 4 8 3q1-2 4-2 4 2 11 0z" fill="#1b9bf0" /></TaskApp>
      <TaskApp label="360浏览器" open><circle cx="12" cy="12" r="11" fill="#fff" /><circle cx="12" cy="12" r="9.500" fill="#4fae2a" /><path d="M5 13q0-7 7-7 6 0 7 6v1H9q1 3 4 3 2 0 4-1-1 4-5 4-6 0-7-6zM9 11h6q-1-3-3-3t-3 3z" fill="#fff" /></TaskApp>
      <TaskApp label="广联达" open active><rect width="24" height="24" rx="4" fill="#0b8df5" /><path d="M15.500 6Q12 4.500 12 8v7.500q0 4-4 3M5 10q-1 5 4 5M5 12.500h14q0 3-4.500 3.500" fill="none" stroke="#fff" strokeWidth="1.800" strokeLinecap="round" /></TaskApp>
      <TaskApp label="记事本" open><rect width="24" height="24" rx="2" fill="#f3a21c" /><path d="M3 6l11-2 4 13-12 3z" fill="#fff8e0" stroke="#b4711a" strokeWidth=".5" /><path d="M6 9l7-1M6 12l8-1M7 15l8-1" stroke="#777" /><path d="M11 14L20 2l2 1-8 13z" fill="#8c2a14" /><path d="M3 22h18" stroke="#ffe060" strokeWidth="2" /></TaskApp>
    </div>
    <div className="ml-auto flex h-10 items-center">
      <button aria-label="显示隐藏的图标" className="flex w-6 justify-center"><svg className="h-2 w-3" viewBox="0 0 12 8"><path d="M1 7l5-5 5 5" fill="none" stroke="#fff" strokeWidth="1.300" /></svg></button>
      <button aria-label="电池" className="flex w-6 justify-center"><svg className="h-4 w-4" viewBox="0 0 16 16"><path d="M5 4.500h9v7H5M14 7h2v2h-2M1 2v2M4 2v2M.5 4.500h4v2q-2 2-4 0zM2.500 8v3.500H5" fill="none" stroke="#fff" /><path d="M6 6h7v4H6z" fill="#fff" /></svg></button>
      <button aria-label="网络" className="flex h-10 w-6 items-center justify-center bg-[#20292c]"><svg className="h-4 w-4" viewBox="0 0 16 16"><path d="M2 14Q3 4 14 3M5 15q1-7 9-8M8 15q1-4 6-4.500" fill="none" stroke="#ccc" strokeWidth="1.300" /><circle cx="13" cy="14" r="1.500" fill="#fff" /></svg></button>
      <button aria-label="音量" className="flex w-6 justify-center"><svg className="h-4 w-4" viewBox="0 0 16 16"><path d="M1 6h2l3-3v10l-3-3H1zM8.500 6q1.500 2 0 4M10.500 4q3 4 0 8M13 2.500q4 5.500 0 11" fill="none" stroke="#fff" /></svg></button>
      <button aria-label="键盘" className="flex w-8 justify-center"><svg className="h-[14px] w-6" viewBox="0 0 24 14"><rect x=".5" y=".5" width="22" height="12" fill="none" stroke="#fff" /><path d="M3 3.500h18M3 6.500h18" stroke="#fff" strokeDasharray="1 1" /><path d="M6 9.500h12" stroke="#fff" /></svg></button>
      <button className="w-6 text-center text-[13px] leading-5">英</button>
      <button aria-label="搜狗" className="flex w-8 justify-center"><Sogou className="h-[17px] w-[17px]" /></button>
      <div className="flex w-20 flex-col items-center text-[12px] leading-[19px]"><span>14:50</span><span>2017/11/2</span></div>
      <button aria-label="2 条通知" className="relative flex w-10 justify-center">
        <svg className="h-6 w-6" viewBox="0 0 24 24"><path d="M1 0h16v12h-9l-4 4v-4H1z" fill="#fff" /><path d="M4 3.500h10M4 6.500h10M4 9.500h6" stroke="#111" /><circle cx="16" cy="15.500" r="7.500" fill="#333" stroke="#777" /></svg>
        <span className="absolute left-[21px] top-[7px] text-[12px] font-bold leading-4">2</span>
      </button>
      <span className="ml-1 h-10 w-px bg-[#555]" />
      <span className="w-1" />
    </div>
  </footer>
);

export default function App() {
  return (
    <div className="relative flex h-screen flex-col overflow-hidden bg-[#f0f0f0] font-['Noto_Sans','Noto_Sans_CJK_SC',sans-serif] text-[12px] leading-4 text-black">
      <header className="flex h-[23px] shrink-0 items-center bg-white pr-[3px]">
        <span className="flex w-[132px] shrink-0 items-center gap-[5px] whitespace-nowrap pl-[2px]"><Icon name="app" />广联达BIM钢筋算量</span>
        <ImeBar />
        <h1 className="flex-1 whitespace-nowrap font-['Roboto','Noto_Sans_CJK_SC',sans-serif] text-[13px]">istrator.PC-20141127NRHM\Desktop\白龙村-2016-08-25-13-27-07(2166版)_16G.GGJ12]</h1>
        <button aria-label="最小化" className="flex w-[45px] justify-center"><svg className="h-[11px] w-[11px]" viewBox="0 0 11 11"><path d="M0 5.500h11" stroke="#000" /></svg></button>
        <button aria-label="还原" className="flex w-[45px] justify-center"><svg className="h-[11px] w-[11px]" viewBox="0 0 11 11"><path d="M.5 2.500h8v8h-8zM2.500 2V.5h8v8H9" fill="none" stroke="#000" /></svg></button>
        <button aria-label="关闭" className="flex w-[45px] justify-center"><svg className="h-[11px] w-[11px]" viewBox="0 0 11 11"><path d="M.5.5l10 10M10.500.5l-10 10" stroke="#000" /></svg></button>
      </header>
      <div className="absolute -top-[27px] left-[1140px] flex h-[46px] w-[46px] items-end justify-center rounded-full border-2 border-[#a8b8a8] bg-[#36c05c] pb-[2px] text-[12px] font-bold text-white shadow">72</div>

      <nav className="flex h-[30px] shrink-0 items-center">
        <div className="flex items-center gap-[11px] whitespace-nowrap pl-[7px]">
          {menus.map((m) => <button key={m}>{m}</button>)}
        </div>
        <div className="flex shrink-0 items-center pl-2">
          <Tool icon="doc" label="新建变更" drop />
          <Tool icon="robot" label="广小二" />
        </div>
        <a href="#tip" className="ml-[2px] flex h-7 w-[188px] shrink-0 items-center justify-center bg-[#f8f8f8] text-[#0f6b6b]">为什么筏板XY方向布置..</a>
        <div className="ml-[2px] flex h-7 flex-1 items-center bg-[#f8f8f8]">
          <Tool icon="user" label="13907298339" drop />
          <span className="whitespace-nowrap pl-[3px]">造价豆:0</span>
          <button aria-label="通知" className="ml-2"><Icon name="bell" /></button>
          <More edge />
        </div>
      </nav>

      <div className="flex h-[31px] shrink-0 items-center gap-[3px]">
        <Bar className="w-[149px] pl-px">
          <button aria-label="新建" className="p-[3px]"><Icon name="newfile" /></button>
          <button aria-label="打开" className="flex items-center p-[3px]"><Icon name="open" /><Caret className="w-4" /></button>
          <button aria-label="保存" className="p-[3px]"><Icon name="save" /></button>
          <Sep />
          <button aria-label="撤消" className="flex items-center p-[3px]"><Icon name="undo" /><Caret className="w-4" /></button>
          <More />
        </Bar>
        <Bar className="w-[549px]">
          <Tool icon="define" label="定义" /><Tool sigma label="汇总计算" /><Tool icon="cloudcheck" label="云检查" /><Tool icon="level" label="平齐板顶" />
          <Tool icon="binoc" label="查找图元" /><Tool icon="glasses" label="查看钢筋量" /><Tool icon="batch" label="批量选择" state="off" />
          <More />
        </Bar>
        <Bar className="min-w-0 flex-1">
          <Tool icon="cube" label="三维" drop /><Tool icon="cubetop" label="俯视" drop /><Tool icon="orbit" label="动态观察" state="on" /><Tool icon="local3d" label="局部三维" state="off" />
          <Sep />
          <Tool icon="full" label="全屏" /><Tool icon="zoomi" label="缩放" drop /><Tool icon="pan" label="平移" drop /><Tool icon="screenrot" label="屏幕旋转" drop="tight" />
          <Sep />
          <Tool icon="floors" label="选择楼层" />
          <More edge />
        </Bar>
      </div>

      <div className="flex min-h-0 flex-1 gap-[5px]">
        <Sidebar />
        <main className="flex min-w-0 flex-1 flex-col">
          <div className="flex h-[27px] shrink-0 items-center">
            <Bar className="pr-[2px]">
              <Grip /><Tool icon="brush" label="删除" /><Sep />
              <Tool icon="copy" label="复制" /><Tool icon="mirror" label="镜像" /><Sep />
              <Tool icon="move" label="移动" /><Tool icon="rotate" label="旋转" /><Sep />
              <Tool icon="extend" label="延伸" /><Tool icon="trim" label="修剪" /><Sep />
              <Tool icon="breaki" label="打断" /><Tool icon="merge" label="合并" /><Tool icon="split" label="分割" state="off" /><Sep />
              <Tool icon="align" label="对齐" drop="tight" /><Tool icon="offset" label="偏移" /><Tool icon="stretch" label="拉伸" /><Sep />
              <Tool icon="grippt" label="设置夹点" state="off" />
            </Bar>
          </div>
          <div className="flex h-7 shrink-0 items-center gap-[3px]">
            <Bar>
              <Grip />
              <span className="flex gap-[2px]">
                <Combo label="楼层" value="首层" className="w-[59px]" /><Combo label="构件类别" value="梁" /><Combo label="构件类型" value="梁" /><Combo label="构件名称" value="KL-12" /><Combo label="分层" value="分层1" />
              </span>
              <Sep /><Tool icon="prop" label="属性" /><Tool icon="editbar" label="编辑钢筋" /><Tool icon="list" label="构件列表" /><Tool icon="picker" label="拾取构件" />
            </Bar>
            <Bar className="pr-[2px]">
              <Grip /><Tool icon="twopt" label="两点" /><Tool icon="parallel" label="平行" /><Tool icon="ptangle" label="点角" drop /><Tool icon="threept" label="三点辅轴" drop />
              <Tool icon="brush" label="删除辅轴" state="deep" /><Tool icon="dim" label="尺寸标注" drop />
            </Bar>
          </div>
          <div className="flex h-[29px] shrink-0 items-center gap-[3px]">
            <Bar className="min-w-0 flex-1">
              <Grip /><Tool icon="arrow" label="选择" drop /><Sep />
              <Tool icon="line" label="直线" /><Tool icon="ptlen" label="点加长度" /><Tool icon="arc" label="三点画弧" drop="tight" />
              <Combo label="画弧参数" value="" className="w-14" /><Tool icon="rect" label="矩形" /><Sep />
              <Tool icon="smart" label="智能布置" drop="tight" /><Sep />
              <Tool icon="modseg" label="修改梁段属性" /><Tool icon="mark" label="原位标注" drop /><Tool icon="respan" label="重提梁跨" drop /><Tool icon="spancopy" label="梁跨数据复制" drop />
              <Tool icon="recog" label="批量识别梁支座" /><Tool icon="apply" label="应用到同名梁" />
              <More />
            </Bar>
            <Bar className="w-8"><Grip /></Bar>
          </div>

          <Viewport />

          <div className="flex h-[31px] shrink-0 items-center">
            <Bar>
              <Grip /><Tool icon="ortho" label="正交" /><Tool icon="snap" label="对象捕捉" state="on" /><Tool icon="dyn" label="动态输入" state="on" />
            </Bar>
            <Bar className="pl-[2px]">
              <Grip /><Tool icon="cross" label="交点" /><Tool icon="perp" label="垂点" state="on" /><Tool icon="mid" label="中点" state="on" /><Tool icon="vertex" label="顶点" /><Tool icon="coord" label="坐标" />
            </Bar>
            <Bar className="pl-[3px] pr-1 text-[#808080]">
              <Grip /><Combo label="偏移方式" value="不偏移" className="w-[57px] text-black" /><Sep />
              <span className="flex items-center gap-[3px]">
                <span className="w-4">X=</span><Spin label="X" value="0" className="w-[58px]" /><span className="w-[22px]">mm</span>
                <span className="w-4">Y=</span><Spin label="Y" value="0" className="w-[58px]" /><span className="w-[22px]">mm</span>
              </span>
              <Sep />
              <label className="flex items-center gap-2 pr-1 text-black">
                <input type="checkbox" className="h-[11px] w-[11px] appearance-none border border-[#a0a0a0] bg-white" />旋转
              </label>
              <Spin label="旋转角度" value="0.000" className="w-[68px]" /><span className="pl-[2px]">°</span>
            </Bar>
          </div>
        </main>
      </div>

      <div className="flex h-[22px] shrink-0 gap-[2px] bg-white pt-[2px]">
        <StatusCell className="w-[148px]">X=66459 Y=16024</StatusCell>
        <StatusCell className="w-[78px]">层高:4.5m</StatusCell>
        <StatusCell className="w-[98px]">底标高:-0.03m</StatusCell>
        <StatusCell className="w-12">0</StatusCell>
        <span className="flex-1 border-2 border-[#dcdcdc] bg-[#f8f8f8]" />
        <StatusCell className="w-[70px]">526.5 FPS</StatusCell>
      </div>
      <Taskbar />
    </div>
  );
}
